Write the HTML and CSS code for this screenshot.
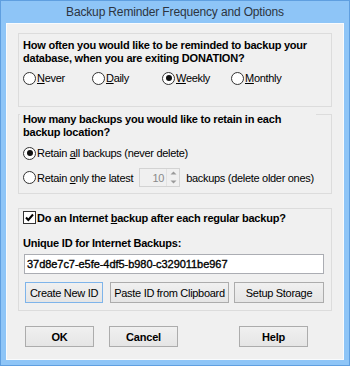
FILE: index.html
```html
<!DOCTYPE html>
<html lang="en">
<head>
  <meta charset="UTF-8" />
  <title>Backup Reminder Frequency and Options</title>
  <link rel="stylesheet" href="styles.css">
</head>
<body>
  <div class="window">
    <div class="titlebar">Backup Reminder Frequency and Options</div>

    <div class="client">
      <div class="group group-freq">
        <div class="heading">How often you would like to be reminded to backup your<br>database, when you are exiting DONATION?</div>
        <div class="radio-row">
          <label class="opt"><span class="radio"></span><span><u>N</u>ever</span></label>
          <label class="opt"><span class="radio"></span><span><u>D</u>aily</span></label>
          <label class="opt"><span class="radio checked"></span><span><u>W</u>eekly</span></label>
          <label class="opt"><span class="radio"></span><span><u>M</u>onthly</span></label>
        </div>
      </div>

      <div class="group group-retain">
        <div class="heading caption">How many backups you would like to retain in each<br>backup location?</div>
        <label class="opt line-all"><span class="radio checked"></span><span>Retain <u>a</u>ll backups (never delete)</span></label>
        <div class="opt line-latest">
          <span class="radio"></span><span>Retain <u>o</u>nly the latest</span>
          <span class="spin">
            <span class="spin-val">10</span>
            <span class="spin-btns">
              <svg width="7" height="4" viewBox="0 0 7 4"><path d="M0.5 3.5 L3.5 0.5 L6.5 3.5 Z" fill="#9a9a9a"/></svg>
              <svg width="7" height="4" viewBox="0 0 7 4"><path d="M0.5 0.5 L3.5 3.5 L6.5 0.5 Z" fill="#9a9a9a"/></svg>
            </span>
          </span>
          <span class="after-spin">backups (delete older ones)</span>
        </div>
      </div>

      <div class="group group-net">
        <label class="opt check-row">
          <span class="checkbox">
            <svg width="11" height="11" viewBox="0 0 11 11"><path d="M2 5.5 L4.3 8 L9 2.5" fill="none" stroke="#000" stroke-width="2"/></svg>
          </span>
          <b>Do an Internet <u>b</u>ackup after each regular backup?</b>
        </label>
        <div class="heading id-label">Unique ID for Internet Backups:</div>
        <div class="idbox">37d8e7c7-e5fe-4df5-b980-c329011be967</div>
        <div class="btn-row">
          <button class="btn focus w-create">Create New ID</button>
          <button class="btn w-paste">Paste ID from Clipboard</button>
          <button class="btn w-setup">Setup Storage</button>
        </div>
      </div>

      <div class="footer-btns">
        <button class="btn main">OK</button>
        <button class="btn main">Cancel</button>
        <button class="btn main help">Help</button>
      </div>
    </div>
  </div>
</body>
</html>
```

FILE: styles.css
```css
* {
  box-sizing: border-box;
}
body {
  margin: 0;
  font-family: 'Liberation Sans', Arial, sans-serif;
  font-size: 11px;
  letter-spacing: -0.3px;
  color: #000;
  background: #8ec5f7;
}
b {
  letter-spacing: -0.22px;
}
.window {
  width: 350px;
  height: 366px;
  background: #8ec5f7;
  border: 1px solid #5f9fe0;
}
.titlebar {
  height: 22px;
  line-height: 23px;
  text-align: center;
  font-family: 'Liberation Sans', Arial, sans-serif;
  font-size: 12px;
  letter-spacing: -0.15px;
  color: #2c3440;
}
.client {
  margin: 0 5px 0 5px;
  height: 337px;
  background: #f0f0f0;
  border: 1px solid #f9fbfd;
  padding: 9px 11px 0 11px;
}
.group {
  border: 1px solid #dcdcdc;
  padding-left: 4px;
}
.group-freq {
  height: 74px;
  padding-top: 5px;
}
.group-retain {
  height: 80px;
  margin-top: 7px;
}
.group-net {
  height: 103px;
  margin-top: 14px;
}
.heading {
  font-weight: bold;
  letter-spacing: -0.22px;
  line-height: 13px;
  white-space: nowrap;
}
.caption {
  background: #f0f0f0;
  margin: -2px 15px 0 -3px;
  padding-left: 3px;
}
.opt {
  display: flex;
  align-items: center;
  height: 14px;
  white-space: nowrap;
}
.radio-row {
  display: grid;
  grid-template-columns: 69px 70px 69px auto;
  margin-top: 6px;
}
.radio {
  width: 13px;
  height: 13px;
  border: 1px solid #333;
  border-radius: 50%;
  background: #fff;
  margin-right: 1px;
  display: flex;
  align-items: center;
  justify-content: center;
  flex: none;
}
.radio.checked::after {
  content: "";
  width: 6px;
  height: 6px;
  border-radius: 50%;
  background: #111;
}
u {
  text-decoration: underline;
  text-underline-offset: 1px;
}
.line-all {
  margin-top: 7px;
}
.line-latest {
  margin-top: 8px;
  height: 19px;
}
.spin {
  display: flex;
  align-items: center;
  width: 41px;
  height: 19px;
  margin-left: 6px;
  border: 1px solid #d3d3d3;
  background: #f0f0f0;
}
.spin-val {
  flex: 1;
  text-align: right;
  color: #8a8a8a;
  padding-right: 2px;
}
.spin-btns {
  width: 13px;
  height: 17px;
  display: flex;
  flex-direction: column;
  align-items: center;
  justify-content: space-around;
  border-left: 1px solid #e2e2e2;
}
.after-spin {
  margin-left: 6px;
}
.check-row {
  margin-top: 2px;
  height: 13px;
}
.checkbox {
  width: 13px;
  height: 13px;
  border: 1px solid #333;
  background: #fff;
  margin-right: 1px;
  display: flex;
  align-items: center;
  justify-content: center;
  flex: none;
}
.id-label {
  margin-top: 13px;
}
.idbox {
  margin: 4px 0 0 1px;
  width: 300px;
  height: 20px;
  line-height: 18px;
  border: 1px solid #abadb3;
  background: #fff;
  padding-left: 2px;
  letter-spacing: -0.05px;
  -webkit-text-stroke: 0.35px #000;
  white-space: nowrap;
}
.btn-row {
  display: flex;
  margin: 8px 0 0 2px;
}
.btn {
  height: 21px;
  padding: 0;
  font-family: 'Liberation Sans', Arial, sans-serif;
  font-size: 11px;
  letter-spacing: -0.3px;
  white-space: nowrap;
  color: #000;
  border: 1px solid #acacac;
  background: linear-gradient(#f0f0f0, #e5e5e5);
}
.btn.focus {
  border-color: #7eb4ea;
}
.w-create {
  width: 78px;
}
.w-paste {
  width: 119px;
  margin-left: 7px;
}
.w-setup {
  width: 90px;
  margin-left: 5px;
}
.footer-btns {
  display: flex;
  margin: 15px 0 0 7px;
}
.btn.main {
  width: 69px;
  font-weight: bold;
  letter-spacing: -0.22px;
  margin-right: 15px;
}
.btn.help {
  margin-left: 46px;
}
```
